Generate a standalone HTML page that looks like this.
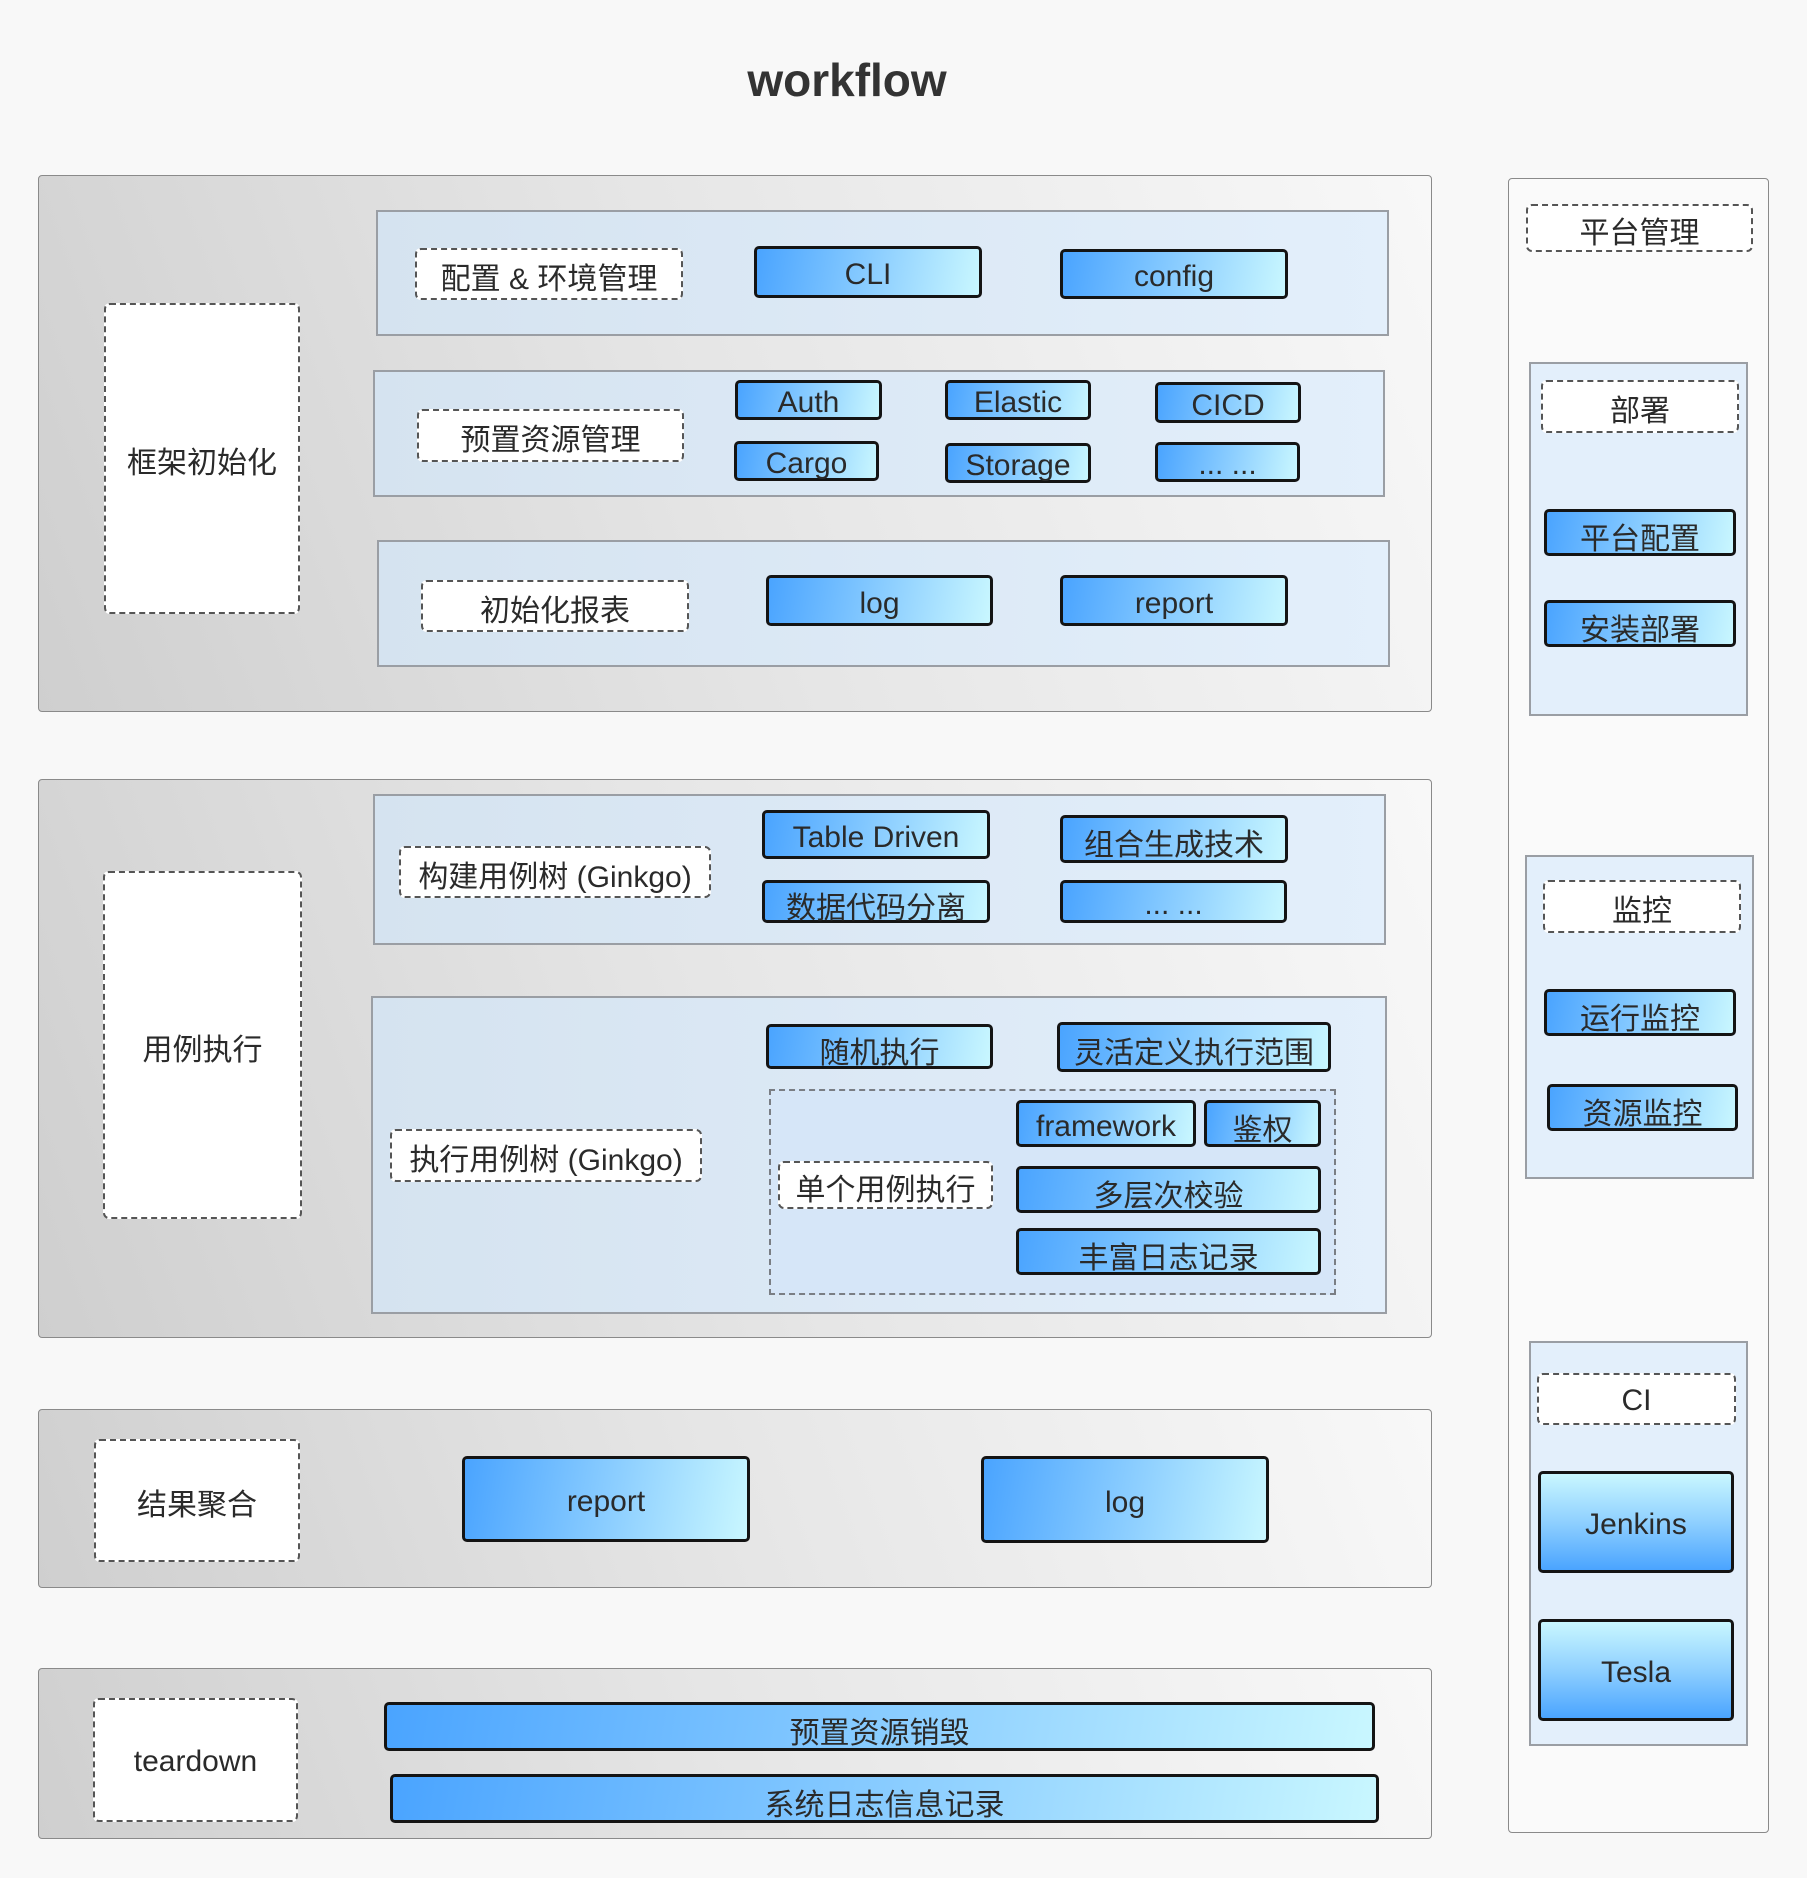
<!DOCTYPE html>
<html><head><meta charset="utf-8"><style>
*{margin:0;padding:0;box-sizing:border-box}
body{width:1807px;height:1878px;background:#f8f8f8;position:relative;overflow:hidden;font-family:"Liberation Sans","Noto Sans CJK SC",sans-serif;color:#2a2a2a}
div{position:absolute}
.c{display:flex;align-items:center;justify-content:center;white-space:nowrap}
.pn{border:1.5px solid #8a8a8a;border-radius:4px;background:linear-gradient(70deg,#cfcfcf 0%,#e6e6e6 50%,#f8f8f8 100%)}
.in{border:2.5px solid #9a9ea4;background:linear-gradient(90deg,#d5e3f0,#e3effb)}
.d{border:2px dashed #555;border-radius:6px;background:#fff;font-size:30px;padding-top:3px}
.b{border:3px solid #141414;border-radius:5px;background:linear-gradient(100deg,#4aa4ff 0%,#8fd0ff 55%,#c9f7ff 100%);font-size:30px;color:#2a2a2a;padding-top:6px}
</style></head><body>
<div class="c" style="left:647px;top:47px;width:400px;height:66px;font-size:46px;font-weight:bold;color:#333">workflow</div>

<div class="pn" style="left:38px;top:175px;width:1394px;height:537px"></div>
<div class="d c" style="left:104px;top:303px;width:196px;height:311px">框架初始化</div>
<div class="in" style="left:376px;top:210px;width:1013px;height:126px"></div>
<div class="in" style="left:373px;top:370px;width:1012px;height:127px"></div>
<div class="in" style="left:377px;top:540px;width:1013px;height:127px"></div>
<div class="d c" style="left:415px;top:248px;width:268px;height:52px">配置 &amp; 环境管理</div>
<div class="b c" style="left:754px;top:246px;width:228px;height:52px">CLI</div>
<div class="b c" style="left:1060px;top:249px;width:228px;height:50px">config</div>
<div class="d c" style="left:417px;top:409px;width:267px;height:53px">预置资源管理</div>
<div class="b c" style="left:735px;top:380px;width:147px;height:40px">Auth</div>
<div class="b c" style="left:945px;top:380px;width:146px;height:40px">Elastic</div>
<div class="b c" style="left:1155px;top:382px;width:146px;height:41px">CICD</div>
<div class="b c" style="left:734px;top:441px;width:145px;height:40px">Cargo</div>
<div class="b c" style="left:945px;top:443px;width:146px;height:40px">Storage</div>
<div class="b c" style="left:1155px;top:442px;width:145px;height:40px">... ...</div>
<div class="d c" style="left:421px;top:580px;width:268px;height:52px">初始化报表</div>
<div class="b c" style="left:766px;top:575px;width:227px;height:51px">log</div>
<div class="b c" style="left:1060px;top:575px;width:228px;height:51px">report</div>

<div class="pn" style="left:38px;top:779px;width:1394px;height:559px"></div>
<div class="d c" style="left:103px;top:871px;width:199px;height:348px">用例执行</div>
<div class="in" style="left:373px;top:794px;width:1013px;height:151px"></div>
<div class="d c" style="left:399px;top:846px;width:312px;height:52px">构建用例树 (Ginkgo)</div>
<div class="b c" style="left:762px;top:810px;width:228px;height:49px">Table Driven</div>
<div class="b c" style="left:1060px;top:815px;width:228px;height:48px">组合生成技术</div>
<div class="b c" style="left:762px;top:880px;width:228px;height:43px">数据代码分离</div>
<div class="b c" style="left:1060px;top:880px;width:227px;height:43px">... ...</div>
<div class="in" style="left:371px;top:996px;width:1016px;height:318px"></div>
<div class="d c" style="left:390px;top:1129px;width:312px;height:53px">执行用例树 (Ginkgo)</div>
<div style="left:769px;top:1089px;width:567px;height:206px;border:2.5px dashed #7a7e84;background:#d6e6f8"></div>
<div class="b c" style="left:766px;top:1024px;width:227px;height:45px">随机执行</div>
<div class="b c" style="left:1057px;top:1022px;width:274px;height:50px">灵活定义执行范围</div>
<div class="d c" style="left:778px;top:1161px;width:215px;height:48px">单个用例执行</div>
<div class="b c" style="left:1016px;top:1100px;width:180px;height:47px">framework</div>
<div class="b c" style="left:1204px;top:1100px;width:117px;height:47px">鉴权</div>
<div class="b c" style="left:1016px;top:1166px;width:305px;height:47px">多层次校验</div>
<div class="b c" style="left:1016px;top:1228px;width:305px;height:47px">丰富日志记录</div>

<div class="pn" style="left:38px;top:1409px;width:1394px;height:179px"></div>
<div class="d c" style="left:94px;top:1439px;width:206px;height:123px">结果聚合</div>
<div class="b c" style="left:462px;top:1456px;width:288px;height:86px">report</div>
<div class="b c" style="left:981px;top:1456px;width:288px;height:87px">log</div>

<div class="pn" style="left:38px;top:1668px;width:1394px;height:171px"></div>
<div class="d c" style="left:93px;top:1698px;width:205px;height:124px">teardown</div>
<div class="b c" style="left:384px;top:1702px;width:991px;height:49px">预置资源销毁</div>
<div class="b c" style="left:390px;top:1774px;width:989px;height:49px">系统日志信息记录</div>

<div style="left:1508px;top:178px;width:261px;height:1655px;border:1.5px solid #8a8a8a;border-radius:4px;background:#fafafa"></div>
<div class="d c" style="left:1526px;top:204px;width:227px;height:48px">平台管理</div>
<div class="in" style="left:1529px;top:362px;width:219px;height:354px;background:#e3effb"></div>
<div class="d c" style="left:1541px;top:380px;width:198px;height:53px">部署</div>
<div class="b c" style="left:1544px;top:509px;width:192px;height:47px">平台配置</div>
<div class="b c" style="left:1544px;top:600px;width:192px;height:47px">安装部署</div>
<div class="in" style="left:1525px;top:855px;width:229px;height:324px;background:#e3effb"></div>
<div class="d c" style="left:1543px;top:880px;width:198px;height:53px">监控</div>
<div class="b c" style="left:1544px;top:989px;width:192px;height:47px">运行监控</div>
<div class="b c" style="left:1547px;top:1084px;width:191px;height:47px">资源监控</div>
<div class="in" style="left:1529px;top:1341px;width:219px;height:405px;background:#e3effb"></div>
<div class="d c" style="left:1537px;top:1373px;width:199px;height:52px">CI</div>
<div class="b c" style="left:1538px;top:1471px;width:196px;height:102px;background:linear-gradient(180deg,#c9f7ff,#8fd0ff 50%,#4aa4ff)">Jenkins</div>
<div class="b c" style="left:1538px;top:1619px;width:196px;height:102px;background:linear-gradient(180deg,#c9f7ff,#8fd0ff 50%,#4aa4ff)">Tesla</div>
</body></html>
